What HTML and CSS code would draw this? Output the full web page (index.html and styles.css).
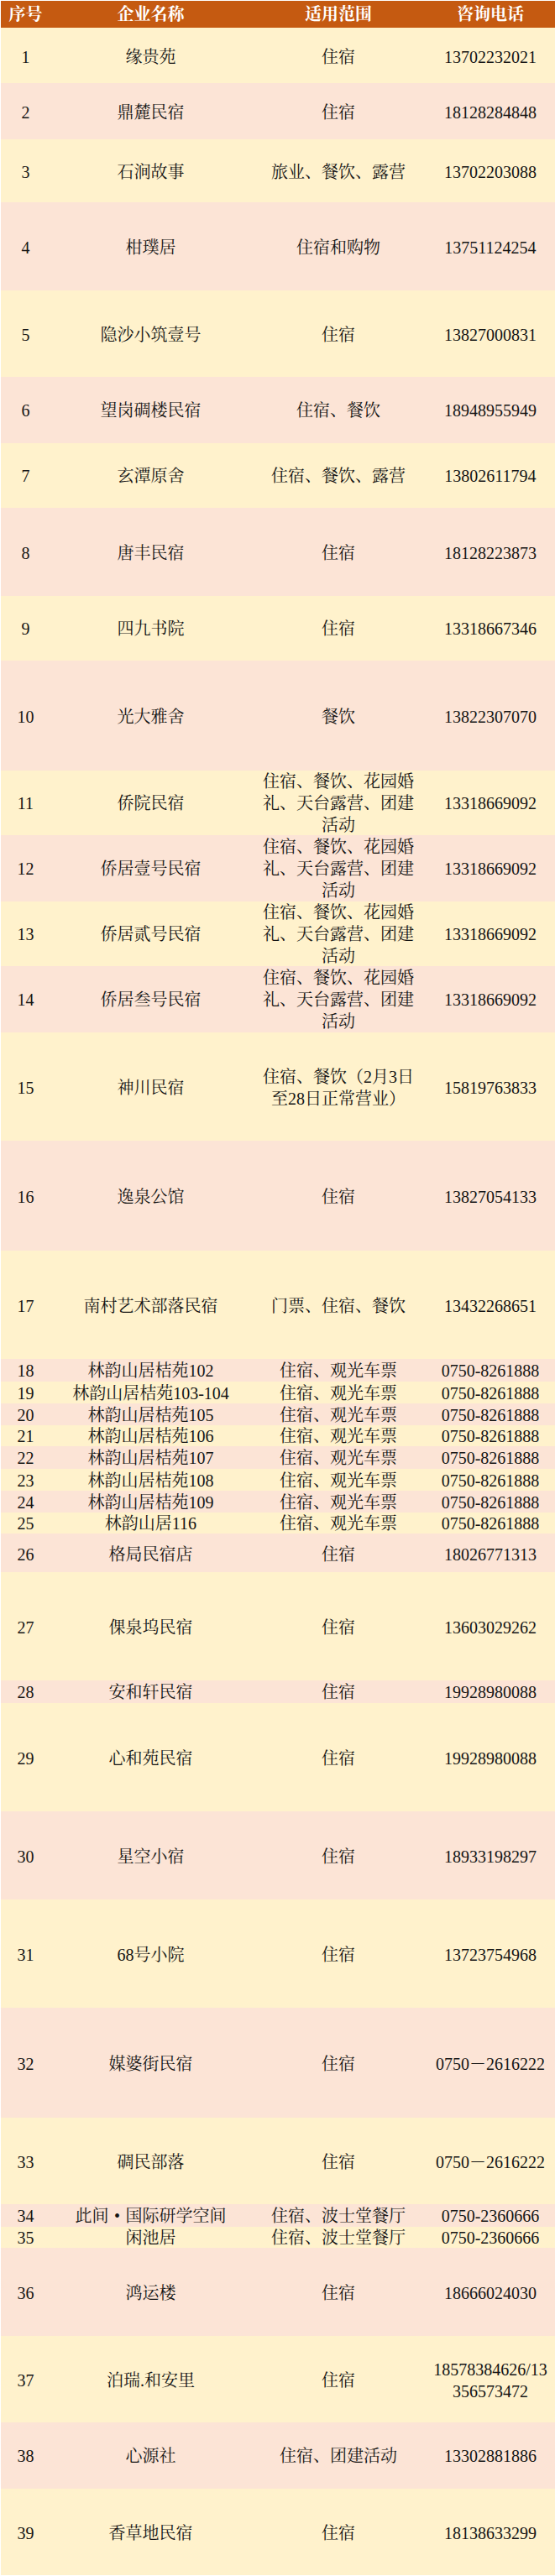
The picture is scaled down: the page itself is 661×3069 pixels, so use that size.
FILE: index.html
```html
<!DOCTYPE html>
<html lang="zh-CN">
<head>
<meta charset="utf-8">
<title>企业名单</title>
<link rel="stylesheet" href="styles.css">
</head>
<body>
<div class="sheet">
  <div class="row head"><div class="c">序号</div><div class="c">企业名称</div><div class="c">适用范围</div><div class="c">咨询电话</div></div>
  <div class="row odd h66"><div class="c">1</div><div class="c">缘贵苑</div><div class="c">住宿</div><div class="c">13702232021</div></div>
  <div class="row even h67"><div class="c">2</div><div class="c">鼎麓民宿</div><div class="c">住宿</div><div class="c">18128284848</div></div>
  <div class="row odd h75"><div class="c">3</div><div class="c">石涧故事</div><div class="c">旅业、餐饮、露营</div><div class="c">13702203088</div></div>
  <div class="row even h105"><div class="c">4</div><div class="c">柑璞居</div><div class="c">住宿和购物</div><div class="c">13751124254</div></div>
  <div class="row odd h103"><div class="c">5</div><div class="c">隐沙小筑壹号</div><div class="c">住宿</div><div class="c">13827000831</div></div>
  <div class="row even h79"><div class="c">6</div><div class="c">望岗碉楼民宿</div><div class="c">住宿、餐饮</div><div class="c">18948955949</div></div>
  <div class="row odd h77"><div class="c">7</div><div class="c">玄潭原舍</div><div class="c">住宿、餐饮、露营</div><div class="c">13802611794</div></div>
  <div class="row even h105"><div class="c">8</div><div class="c">唐丰民宿</div><div class="c">住宿</div><div class="c">18128223873</div></div>
  <div class="row odd h77"><div class="c">9</div><div class="c">四九书院</div><div class="c">住宿</div><div class="c">13318667346</div></div>
  <div class="row even h131"><div class="c">10</div><div class="c">光大雅舍</div><div class="c">餐饮</div><div class="c">13822307070</div></div>
  <div class="row odd h77"><div class="c">11</div><div class="c">侨院民宿</div><div class="c">住宿、餐饮、花园婚礼、天台露营、团建活动</div><div class="c">13318669092</div></div>
  <div class="row even h79"><div class="c">12</div><div class="c">侨居壹号民宿</div><div class="c">住宿、餐饮、花园婚礼、天台露营、团建活动</div><div class="c">13318669092</div></div>
  <div class="row odd h77"><div class="c">13</div><div class="c">侨居贰号民宿</div><div class="c">住宿、餐饮、花园婚礼、天台露营、团建活动</div><div class="c">13318669092</div></div>
  <div class="row even h79"><div class="c">14</div><div class="c">侨居叁号民宿</div><div class="c">住宿、餐饮、花园婚礼、天台露营、团建活动</div><div class="c">13318669092</div></div>
  <div class="row odd h129"><div class="c">15</div><div class="c">神川民宿</div><div class="c">住宿、餐饮（2月3日至28日正常营业）</div><div class="c">15819763833</div></div>
  <div class="row even h131"><div class="c">16</div><div class="c">逸泉公馆</div><div class="c">住宿</div><div class="c">13827054133</div></div>
  <div class="row odd h129"><div class="c">17</div><div class="c">南村艺术部落民宿</div><div class="c">门票、住宿、餐饮</div><div class="c">13432268651</div></div>
  <div class="row even h27"><div class="c">18</div><div class="c">林韵山居桔苑102</div><div class="c">住宿、观光车票</div><div class="c">0750-8261888</div></div>
  <div class="row odd h26"><div class="c">19</div><div class="c">林韵山居桔苑103-104</div><div class="c">住宿、观光车票</div><div class="c">0750-8261888</div></div>
  <div class="row even h26"><div class="c">20</div><div class="c">林韵山居桔苑105</div><div class="c">住宿、观光车票</div><div class="c">0750-8261888</div></div>
  <div class="row odd h25"><div class="c">21</div><div class="c">林韵山居桔苑106</div><div class="c">住宿、观光车票</div><div class="c">0750-8261888</div></div>
  <div class="row even h27"><div class="c">22</div><div class="c">林韵山居桔苑107</div><div class="c">住宿、观光车票</div><div class="c">0750-8261888</div></div>
  <div class="row odd h26"><div class="c">23</div><div class="c">林韵山居桔苑108</div><div class="c">住宿、观光车票</div><div class="c">0750-8261888</div></div>
  <div class="row even h26"><div class="c">24</div><div class="c">林韵山居桔苑109</div><div class="c">住宿、观光车票</div><div class="c">0750-8261888</div></div>
  <div class="row odd h25"><div class="c">25</div><div class="c">林韵山居116</div><div class="c">住宿、观光车票</div><div class="c">0750-8261888</div></div>
  <div class="row even h46"><div class="c">26</div><div class="c">格局民宿店</div><div class="c">住宿</div><div class="c">18026771313</div></div>
  <div class="row odd h129"><div class="c">27</div><div class="c">倮泉坞民宿</div><div class="c">住宿</div><div class="c">13603029262</div></div>
  <div class="row even h27"><div class="c">28</div><div class="c">安和轩民宿</div><div class="c">住宿</div><div class="c">19928980088</div></div>
  <div class="row odd h129"><div class="c">29</div><div class="c">心和苑民宿</div><div class="c">住宿</div><div class="c">19928980088</div></div>
  <div class="row even h105"><div class="c">30</div><div class="c">星空小宿</div><div class="c">住宿</div><div class="c">18933198297</div></div>
  <div class="row odd h129"><div class="c">31</div><div class="c">68号小院</div><div class="c">住宿</div><div class="c">13723754968</div></div>
  <div class="row even h131"><div class="c">32</div><div class="c">媒婆街民宿</div><div class="c">住宿</div><div class="c">0750－2616222</div></div>
  <div class="row odd h103"><div class="c">33</div><div class="c">碉民部落</div><div class="c">住宿</div><div class="c">0750－2616222</div></div>
  <div class="row even h27"><div class="c">34</div><div class="c">此间<span class="dot">•</span>国际研学空间</div><div class="c">住宿、波士堂餐厅</div><div class="c">0750-2360666</div></div>
  <div class="row odd h25"><div class="c">35</div><div class="c">闲池居</div><div class="c">住宿、波士堂餐厅</div><div class="c">0750-2360666</div></div>
  <div class="row even h105"><div class="c">36</div><div class="c">鸿运楼</div><div class="c">住宿</div><div class="c">18666024030</div></div>
  <div class="row odd h103"><div class="c">37</div><div class="c">泊瑞.和安里</div><div class="c">住宿</div><div class="c">18578384626/13356573472</div></div>
  <div class="row even h79"><div class="c">38</div><div class="c">心源社</div><div class="c">住宿、团建活动</div><div class="c">13302881886</div></div>
  <div class="row odd h103"><div class="c">39</div><div class="c">香草地民宿</div><div class="c">住宿</div><div class="c">18138633299</div></div>
</div>
</body>
</html>
```
FILE: styles.css
```css
html, body {
  margin: 0;
  padding: 0;
  background: #ffffff;
}

body {
  font-family: "Liberation Serif", "Noto Serif CJK SC", "Noto Sans CJK SC", serif;
  font-size: 20px;
  line-height: 26px;
  color: #141414;
}

.sheet {
  margin: 1px 0 0 1px;
  width: 660px;
}

.row {
  display: grid;
  grid-template-columns: 59px 239px 208px 154px;
}

.c {
  display: flex;
  align-items: center;
  justify-content: center;
  text-align: center;
  box-sizing: border-box;
  padding: 3px 8px 0;
  min-height: 0;
  word-break: break-all;
}

.c:nth-child(1) {
  padding-left: 2px;
  padding-right: 2px;
}

.c:nth-child(4) {
  padding-left: 6px;
  padding-right: 6px;
}

.head {
  height: 32px;
  background: #c55a11;
  color: #ffffff;
  font-weight: bold;
}

.head .c {
  padding-top: 0;
}

.odd { background: #fff2cc; }
.even { background: #fce4d6; }

.dot {
  display: inline-block;
  width: 20px;
  text-align: center;
}

.h25 { height: 25px; }
.h26 { height: 26px; }
.h27 { height: 27px; }
.h46 { height: 46px; }
.h66 { height: 66px; }
.h67 { height: 67px; }
.h75 { height: 75px; }
.h77 { height: 77px; }
.h79 { height: 79px; }
.h103 { height: 103px; }
.h105 { height: 105px; }
.h129 { height: 129px; }
.h131 { height: 131px; }

.h25 .c, .h26 .c, .h27 .c,
.h77 .c, .h79 .c {
  padding-top: 1px;
}
```
